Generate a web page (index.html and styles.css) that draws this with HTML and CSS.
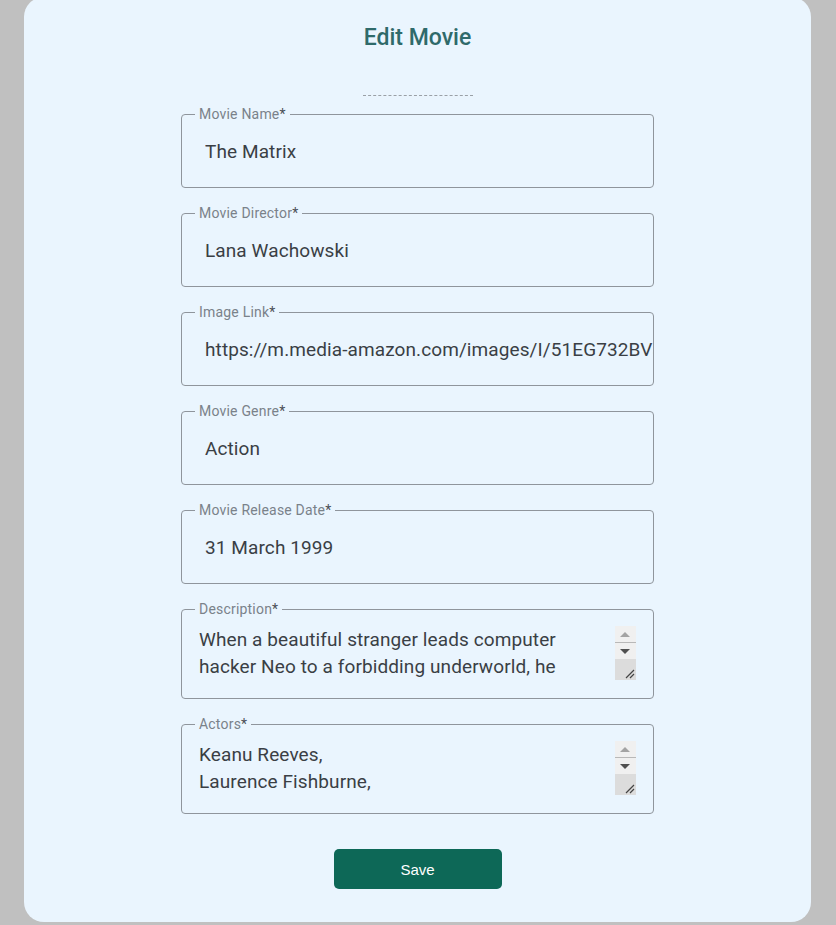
FILE: index.html
```html
<!DOCTYPE html>
<html lang="en">
<head>
<meta charset="utf-8">
<title>Edit Movie</title>
<link rel="stylesheet" href="styles.css">
</head>
<body>
<main class="card">
  <h1 class="title">Edit Movie</h1>
  <div class="divider"></div>
  <form class="form">
    <fieldset class="field">
      <legend class="label">Movie Name<span class="req">*</span></legend>
      <input class="input" type="text" value="The Matrix">
    </fieldset>
    <fieldset class="field">
      <legend class="label">Movie Director<span class="req">*</span></legend>
      <input class="input" type="text" value="Lana Wachowski">
    </fieldset>
    <fieldset class="field">
      <legend class="label">Image Link<span class="req">*</span></legend>
      <input class="input" type="text" value="https://m.media-amazon.com/images/I/51EG732BV3L._AC_.jpg">
    </fieldset>
    <fieldset class="field">
      <legend class="label">Movie Genre<span class="req">*</span></legend>
      <input class="input" type="text" value="Action">
    </fieldset>
    <fieldset class="field">
      <legend class="label">Movie Release Date<span class="req">*</span></legend>
      <input class="input" type="text" value="31 March 1999">
    </fieldset>
    <fieldset class="field">
      <legend class="label">Description<span class="req">*</span></legend>
      <div class="area-row">
        <textarea class="area">When a beautiful stranger leads computer hacker Neo to a forbidding underworld, he discovers the shocking truth--the life he knows is the elaborate deception of an evil cyber-intelligence.</textarea>
        <div class="scrollbar" aria-hidden="true">
          <span class="sb-btn sb-up"></span>
          <span class="sb-btn sb-down"></span>
          <span class="sb-grip"><svg width="10" height="10" viewBox="0 0 10 10"><path d="M1 9 L9 1 M5 9 L9 5" stroke="#444" stroke-width="1.2" fill="none"/></svg></span>
        </div>
      </div>
    </fieldset>
    <fieldset class="field">
      <legend class="label">Actors<span class="req">*</span></legend>
      <div class="area-row">
        <textarea class="area">Keanu Reeves,
Laurence Fishburne,
Carrie-Anne Moss,
Hugo Weaving</textarea>
        <div class="scrollbar" aria-hidden="true">
          <span class="sb-btn sb-up"></span>
          <span class="sb-btn sb-down"></span>
          <span class="sb-grip"><svg width="10" height="10" viewBox="0 0 10 10"><path d="M1 9 L9 1 M5 9 L9 5" stroke="#444" stroke-width="1.2" fill="none"/></svg></span>
        </div>
      </div>
    </fieldset>
    <button class="save" type="button">Save</button>
  </form>
</main>
</body>
</html>
```
FILE: styles.css
```css
html, body {
  margin: 0;
  padding: 0;
}
body {
  background: #c0c0c0;
  font-family: Roboto, "Noto Sans", sans-serif;
  padding-bottom: 4px;
}
.card {
  margin: -3px 25px 0 24px;
  background: #eaf5fe;
  border-radius: 20px;
  padding: 27px 0 33px;
  display: flex;
  flex-direction: column;
  align-items: center;
}
.title {
  margin: 0;
  font-size: 23px;
  line-height: 28px;
  font-weight: 500;
  color: #2f6a6a;
  text-align: center;
}
.divider {
  width: 110px;
  margin: 43px 0 10px;
  border-top: 1px dashed #9aa0a6;
}
.form {
  width: 473px;
  display: flex;
  flex-direction: column;
  gap: 17px;
}
.field {
  margin: 0;
  padding: 0;
  border: 1px solid #8f959c;
  border-radius: 4px;
  min-width: 0;
}
.label {
  margin-left: 13px;
  padding: 0 4px;
  font-size: 14px;
  line-height: 17px;
  letter-spacing: 0.2px;
  color: #7a828a;
}
.req {
  color: #4a5056;
}
.input {
  display: block;
  width: 100%;
  box-sizing: border-box;
  margin: 0;
  border: 0;
  outline: none;
  background: transparent;
  font-family: Roboto, "Noto Sans", sans-serif;
  font-size: 19px;
  letter-spacing: 0.1px;
  line-height: 24px;
  height: 64px;
  padding: 16px 0 24px 23px;
  color: #3a3f45;
}
.area-row {
  display: flex;
  align-items: flex-start;
  padding: 8px 17px 18px 17px;
  gap: 6px;
}
.area {
  flex: 1;
  min-width: 0;
  height: 54px;
  margin: 0;
  padding: 0;
  border: 0;
  outline: none;
  background: transparent;
  resize: none;
  overflow: hidden;
  font-family: Roboto, "Noto Sans", sans-serif;
  font-size: 19px;
  letter-spacing: 0.1px;
  line-height: 27px;
  color: #3a3f45;
}
.scrollbar {
  width: 21px;
  height: 54px;
  display: flex;
  flex-direction: column;
}
.sb-btn {
  height: 16px;
  background: #f0f0f0;
  position: relative;
}
.sb-up {
  border-bottom: 1px solid #b8b8b8;
}
.sb-up::after,
.sb-down::after {
  content: "";
  position: absolute;
  left: 5px;
  width: 0;
  height: 0;
  border-left: 5px solid transparent;
  border-right: 5px solid transparent;
}
.sb-up::after {
  top: 6px;
  border-bottom: 5px solid #a3a3a3;
}
.sb-down::after {
  top: 6px;
  border-top: 5px solid #505050;
}
.sb-grip {
  flex: 1;
  background: #dcdcdc;
  display: flex;
  align-items: flex-end;
  justify-content: flex-end;
  padding: 0 1px 1px 0;
}
.save {
  align-self: center;
  margin-top: 18px;
  width: 168px;
  height: 40px;
  border: 0;
  border-radius: 5px;
  background: #0d6857;
  color: #ffffff;
  font-family: "Liberation Sans", Arial, sans-serif;
  font-size: 15px;
  cursor: pointer;
}
```
